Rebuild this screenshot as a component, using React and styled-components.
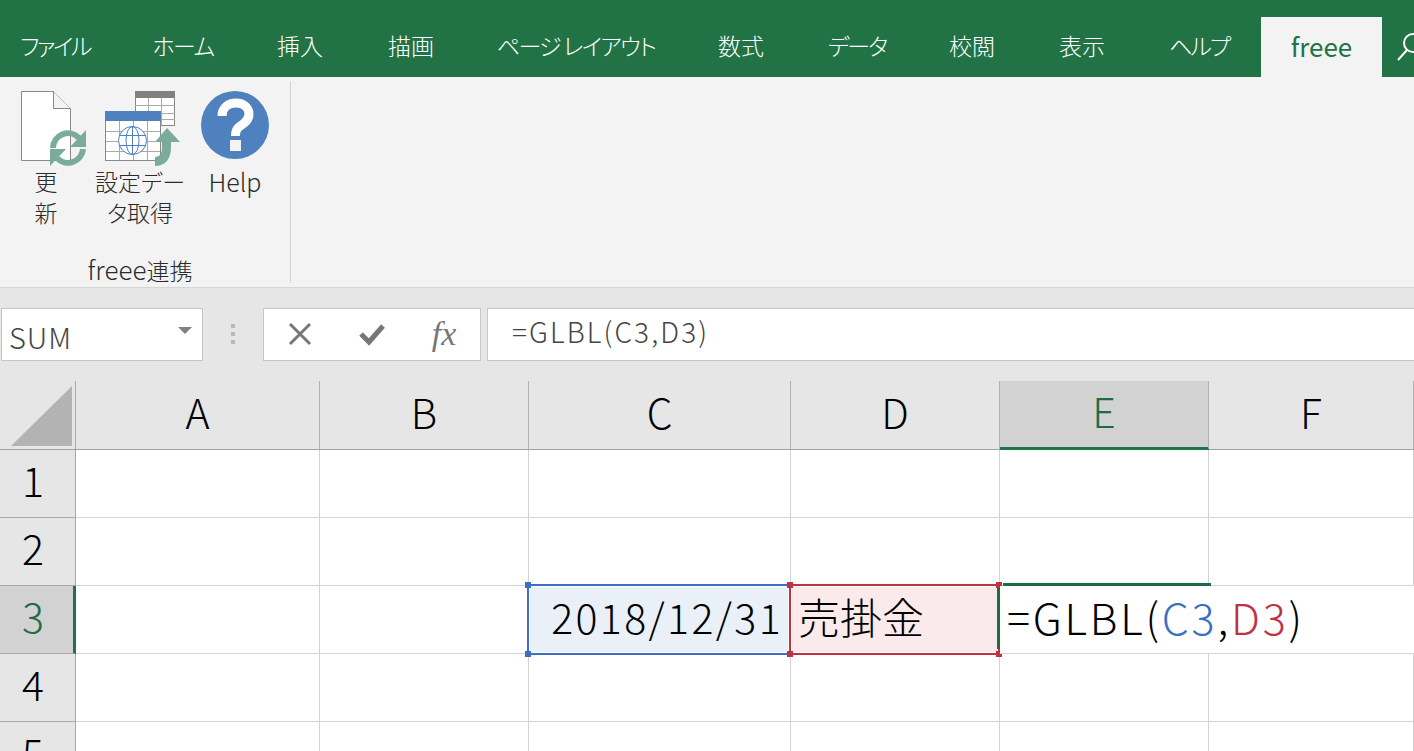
// Libs
import React from 'react';
import styled, { createGlobalStyle } from 'styled-components';

const GREEN = '#217346';
const BLUE = '#3a6fc4';
const RED = '#c0323f';
const ICON_GREEN = '#7bab9a';
const ICON_BLUE = '#4e81bd';
const FONT = `"Noto Sans CJK JP", "Noto Sans", sans-serif`;

// Styles
const GlobalStyle = createGlobalStyle`
  html, body {
    margin: 0;
    padding: 0;
    background: #fff;
    overflow: hidden;
  }

  * {
    box-sizing: border-box;
  }
`;

const Page = styled.div`
  display: flex;
  flex-direction: column;
  width: 1414px;
  height: 751px;
  overflow: hidden;
  font-family: ${FONT};
  font-feature-settings: 'palt';
`;

const TabBar = styled.nav`
  display: flex;
  flex: none;
  align-items: flex-end;
  height: 77px;
  background: ${GREEN};
`;

const Tab = styled.div`
  display: flex;
  flex: none;
  align-items: center;
  justify-content: center;
  width: ${(p) => p.$width}px;
  height: 60px;
  padding-bottom: 4px;
  padding-right: ${(p) => p.$trim || 0}px;
  font-size: ${(p) => (p.$active ? 26 : 23)}px;
  font-weight: ${(p) => (p.$active ? 400 : 300)};
  letter-spacing: ${(p) => p.$spacing || 0}px;
  white-space: nowrap;
  color: ${(p) => (p.$active ? GREEN : '#fff')};
  background: ${(p) => (p.$active ? '#f3f3f3' : 'transparent')};
`;

const SearchIcon = styled.svg`
  flex: none;
  align-self: flex-start;
  width: 32px;
  height: 77px;
`;

const Ribbon = styled.section`
  display: flex;
  flex: none;
  height: 211px;
  padding: 4px 0;
  background: #f3f3f3;
  border-bottom: 1px solid #d6d6d6;
`;

const RibbonGroup = styled.div`
  display: flex;
  flex-direction: column;
  width: 291px;
  padding: 7px 8px 0 0;
  border-right: 1px solid #d2d2d2;
`;

const GroupButtons = styled.div`
  display: flex;
`;

const RibbonButton = styled.div`
  display: flex;
  flex: none;
  flex-direction: column;
  align-items: center;
  width: ${(p) => p.$width}px;
`;

const ButtonLabel = styled.div`
  margin-top: -2px;
  font-size: ${(p) => p.$size || 23}px;
  line-height: 31px;
  font-weight: 300;
  text-align: center;
  white-space: nowrap;
  color: #2b2b2b;
`;

const GroupLabel = styled.div`
  margin: auto 2px 1px 0;
  font-size: 23px;
  line-height: 24px;
  font-weight: 300;
  text-align: center;
  color: #2b2b2b;
`;

const LatinRun = styled.span`
  font-size: 26px;
`;

const FormulaBar = styled.section`
  display: flex;
  flex: none;
  height: 93px;
  padding: 20px 0 20px 1px;
  background: #e6e6e6;
`;

const NameBox = styled.div`
  display: flex;
  flex: none;
  align-items: center;
  justify-content: space-between;
  width: 202px;
  padding: 2px 10px 0 7px;
  font-size: 29px;
  font-weight: 300;
  letter-spacing: 1px;
  color: #444;
  background: #fff;
  border: 1px solid #c6c6c6;
`;

const DropArrow = styled.span`
  width: 0;
  height: 0;
  margin-top: -10px;
  border-top: 7px solid #808080;
  border-left: 7px solid transparent;
  border-right: 7px solid transparent;
`;

const Grip = styled.div`
  display: flex;
  flex: none;
  flex-direction: column;
  align-items: center;
  gap: 4px;
  width: 60px;
  padding-top: 16px;

  span {
    width: 4px;
    height: 4px;
    background: #b9b9b9;
  }
`;

const FormulaButtons = styled.div`
  display: flex;
  flex: none;
  width: 218px;
  background: #fff;
  border: 1px solid #c6c6c6;
`;

const FormulaButton = styled.div`
  display: flex;
  align-items: center;
  justify-content: center;
  width: 72px;
  padding-bottom: 2px;
  font: italic 34px 'Liberation Serif', serif;
  color: #777;
`;

const FormulaInput = styled.div`
  display: flex;
  flex: 1;
  align-items: center;
  margin-left: 6px;
  padding: 0 0 8px 24px;
  font-size: 28px;
  font-weight: 300;
  letter-spacing: 2.100px;
  color: #444;
  background: #fff;
  border: 1px solid #c6c6c6;
  border-right: 0;
`;

const Sheet = styled.div`
  display: grid;
  flex: none;
  grid-template-columns: 76px 244px 209px 262px 209px 209px 205px;
  grid-template-rows: 69px repeat(5, 68px);
`;

const Corner = styled.div`
  position: relative;
  background: #e6e6e6;
  border-right: 1px solid #a8a8a8;
  border-bottom: 1px solid #a0a0a0;

  &::after {
    content: '';
    position: absolute;
    right: 3px;
    bottom: 3px;
    width: 0;
    height: 0;
    border-bottom: 60px solid #b3b3b3;
    border-left: 61px solid transparent;
  }
`;

const ColumnHeader = styled.div`
  display: flex;
  align-items: center;
  justify-content: center;
  padding-bottom: 9px;
  font-size: 41px;
  font-weight: 300;
  color: ${(p) => (p.$active ? '#1e6b44' : '#000')};
  background: ${(p) => (p.$active ? '#d2d2d2' : '#e6e6e6')};
  border-right: 1px solid #b0b0b0;
  border-bottom: ${(p) => (p.$active ? `3px solid ${GREEN}` : '1px solid #a0a0a0')};
`;

const RowHeader = styled.div`
  display: flex;
  align-items: center;
  justify-content: center;
  padding: 0 ${(p) => (p.$active ? 7 : 9)}px 10px 0;
  font-size: 41px;
  font-weight: 300;
  color: ${(p) => (p.$active ? '#1e6b44' : '#000')};
  background: ${(p) => (p.$active ? '#d2d2d2' : '#e6e6e6')};
  border-right: ${(p) => (p.$active ? `3px solid ${GREEN}` : '1px solid #a8a8a8')};
  border-bottom: 1px solid #a8a8a8;
`;

const Cell = styled.div`
  position: relative;
  z-index: ${(p) => p.$layer || 'auto'};
  background: #fff;
  border-right: ${(p) => (p.$open ? '0' : '1px solid #d4d4d4')};
  border-bottom: 1px solid #d4d4d4;
`;

const RefRange = styled.div`
  position: absolute;
  top: -2px;
  left: -2px;
  right: -1px;
  bottom: -2px;
  display: flex;
  align-items: center;
  justify-content: ${(p) => p.$justify};
  padding: 0 ${(p) => p.$pad}px 8px;
  font-size: ${(p) => p.$size}px;
  font-weight: 300;
  letter-spacing: ${(p) => p.$spacing || 0}px;
  white-space: nowrap;
  color: #000;
  background: ${(p) => p.$fill};
  border: 2px solid ${(p) => p.$color};
  box-shadow: inset 0 0 0 1px #fff;
`;

const Handle = styled.span`
  position: absolute;
  width: 6px;
  height: 6px;
  background: ${(p) => p.$color};
  ${(p) => (p.$bottom ? 'bottom: -4px;' : 'top: -4px;')}
  ${(p) => (p.$right ? 'right: -4px;' : 'left: -4px;')}
`;

const EditBox = styled.div`
  position: absolute;
  top: -3px;
  left: -3px;
  width: 214px;
  height: 70px;
  padding: 0 0 0 10px;
  font-size: 43px;
  line-height: 66px;
  font-weight: 300;
  letter-spacing: 2.800px;
  white-space: nowrap;
  color: #000;

  &::before {
    content: '';
    position: absolute;
    top: 0;
    left: 6px;
    right: 0;
    height: 3px;
    background: #1e6b44;
  }

  &::after {
    content: '';
    position: absolute;
    top: 5px;
    left: 0;
    width: 3px;
    height: 61px;
    background: #1e6b44;
  }
`;

const Ref = styled.span`
  color: ${(p) => p.$color};
`;

const RefreshGlyph = () => (
  <svg width="80" height="80" viewBox="0 0 80 80">
    <path d="M15.500 3.500 H47.500 L64.500 20.500 V72.500 H15.500 Z" fill="#fff" stroke="#888" strokeWidth="1" />
    <path d="M47.500 3.500 V20.500 H64.500" fill="#f3f3f3" stroke="#888" strokeWidth="1" />
    <g fill="none" stroke={ICON_GREEN} strokeWidth="6">
      <path d="M47 60 A15 15 0 0 1 73 50" />
      <path d="M77 61 A15 15 0 0 1 51 70" />
    </g>
    <path d="M64 59 L80 59 L80 42 Z" fill={ICON_GREEN} />
    <path d="M44 61 L60 61 L44 78 Z" fill={ICON_GREEN} />
  </svg>
);

const TableGlyph = () => (
  <svg width="80" height="80" viewBox="0 0 80 80">
    <rect x="35.500" y="3.500" width="39" height="34" fill="#fff" stroke="#888" />
    <rect x="35" y="3" width="40" height="7" fill="#808080" />
    <path d="M35 17.500 H75 M35 25.500 H75 M35 31.500 H75 M48.500 10 V37 M61.500 10 V37" stroke="#aaa" fill="none" />
    <rect x="5.500" y="23.500" width="55" height="49" fill="#fff" stroke="#888" />
    <rect x="5" y="23" width="56" height="10" fill={ICON_BLUE} />
    <path d="M6 43.500 H60 M6 53.500 H60 M6 63.500 H60 M19.500 33 V72 M33.500 33 V72 M47.500 33 V72" stroke="#aaa" fill="none" />
    <g fill="#fff" stroke={ICON_BLUE} strokeWidth="1">
      <circle cx="32.500" cy="52.500" r="14" />
      <ellipse cx="32.500" cy="52.500" rx="6.500" ry="14" fill="none" />
      <path d="M32.500 38.500 V66.500 M19 47.500 H46 M19 57.500 H46" fill="none" />
    </g>
    <path d="M67 40 L80 54 H71 V60 C71 70 66 78 55 78 V69 C60 69 62 65 62 60 V54 H55 Z" fill={ICON_GREEN} />
  </svg>
);

const HelpGlyph = () => (
  <svg width="70" height="80" viewBox="0 0 70 80">
    <circle cx="35" cy="37" r="34" fill={ICON_BLUE} />
    <path
      d="M22 28 C22 19 29 15 36 15 C44 15 49 20 49 26 C49 33 43 36 39 39 C36 41 35.500 44 35.500 48"
      fill="none"
      stroke="#fff"
      strokeWidth="9"
    />
    <rect x="30" y="52" width="11" height="11" fill="#f3f3f3" />
  </svg>
);

const tabs = [
  { label: 'ファイル', width: 121, trim: 11, spacing: -2.500 },
  { label: 'ホーム', width: 124, spacing: -1.500 },
  { label: '挿入', width: 110 },
  { label: '描画', width: 112 },
  { label: 'ページ レイアウト', width: 218, spacing: -1.700 },
  { label: '数式', width: 112 },
  { label: 'データ', width: 120, spacing: -2 },
  { label: '校閲', width: 110 },
  { label: '表示', width: 110 },
  { label: 'ヘルプ', width: 124, spacing: -2 },
];

const columns = ['A', 'B', 'C', 'D', 'E', 'F'];
const rows = [1, 2, 3, 4, 5];

const renderCell = (column, row) => {
  const key = `${column}${row}`;

  if (key === 'C3') {
    return (
      <Cell key={key} $layer={1}>
        <RefRange $color={BLUE} $fill="#e9f0f8" $justify="flex-end" $pad={6} $size={41} $spacing={2.4}>
          2018/12/31
          <Handle $color={BLUE} />
          <Handle $color={BLUE} $bottom />
        </RefRange>
      </Cell>
    );
  }

  if (key === 'D3') {
    return (
      <Cell key={key} $layer={2}>
        <RefRange $color={RED} $fill="#faeaeb" $justify="flex-start" $pad={7} $size={42}>
          売掛金
          <Handle $color={RED} />
          <Handle $color={RED} $bottom />
          <Handle $color={RED} $right />
          <Handle $color={RED} $right $bottom />
        </RefRange>
      </Cell>
    );
  }

  if (key === 'E3') {
    return (
      <Cell key={key} $open $layer={3}>
        <EditBox>
          =GLBL(<Ref $color={BLUE}>C3</Ref>,<Ref $color={RED}>D3</Ref>)
        </EditBox>
      </Cell>
    );
  }

  return <Cell key={key} $open={key === 'F3'} />;
};

const App = () => (
  <Page>
    <GlobalStyle />
    <TabBar>
      {tabs.map((tab) => (
        <Tab key={tab.label} $width={tab.width} $trim={tab.trim} $spacing={tab.spacing}>{tab.label}</Tab>
      ))}
      <Tab $width={121} $active>freee</Tab>
      <SearchIcon viewBox="0 0 32 77">
        <circle cx="31" cy="43" r="9" fill="none" stroke="#fff" strokeWidth="2" />
        <path d="M16 60 L25 50" fill="none" stroke="#fff" strokeWidth="2" />
      </SearchIcon>
    </TabBar>

    <Ribbon>
      <RibbonGroup>
        <GroupButtons>
          <RibbonButton $width={92}>
            <RefreshGlyph />
            <ButtonLabel>更<br />新</ButtonLabel>
          </RibbonButton>
          <RibbonButton $width={96}>
            <TableGlyph />
            <ButtonLabel>設定デー<br />タ取得</ButtonLabel>
          </RibbonButton>
          <RibbonButton $width={94}>
            <HelpGlyph />
            <ButtonLabel $size={25}>Help</ButtonLabel>
          </RibbonButton>
        </GroupButtons>
        <GroupLabel><LatinRun>freee</LatinRun>連携</GroupLabel>
      </RibbonGroup>
    </Ribbon>

    <FormulaBar>
      <NameBox>
        SUM
        <DropArrow />
      </NameBox>
      <Grip>
        <span />
        <span />
        <span />
      </Grip>
      <FormulaButtons>
        <FormulaButton>
          <svg width="26" height="24" viewBox="0 0 26 24">
            <path d="M3 2 L23 22 M23 2 L3 22" fill="none" stroke="#777" strokeWidth="3" />
          </svg>
        </FormulaButton>
        <FormulaButton>
          <svg width="28" height="24" viewBox="0 0 28 24">
            <path d="M3 12 L11 20 L25 4" fill="none" stroke="#777" strokeWidth="5" />
          </svg>
        </FormulaButton>
        <FormulaButton>fx</FormulaButton>
      </FormulaButtons>
      <FormulaInput>=GLBL(C3,D3)</FormulaInput>
    </FormulaBar>

    <Sheet>
      <Corner />
      {columns.map((column) => (
        <ColumnHeader key={column} $active={column === 'E'}>{column}</ColumnHeader>
      ))}
      {rows.map((row) => (
        <React.Fragment key={row}>
          <RowHeader $active={row === 3}>{row}</RowHeader>
          {columns.map((column) => renderCell(column, row))}
        </React.Fragment>
      ))}
    </Sheet>
  </Page>
);

export default App;
